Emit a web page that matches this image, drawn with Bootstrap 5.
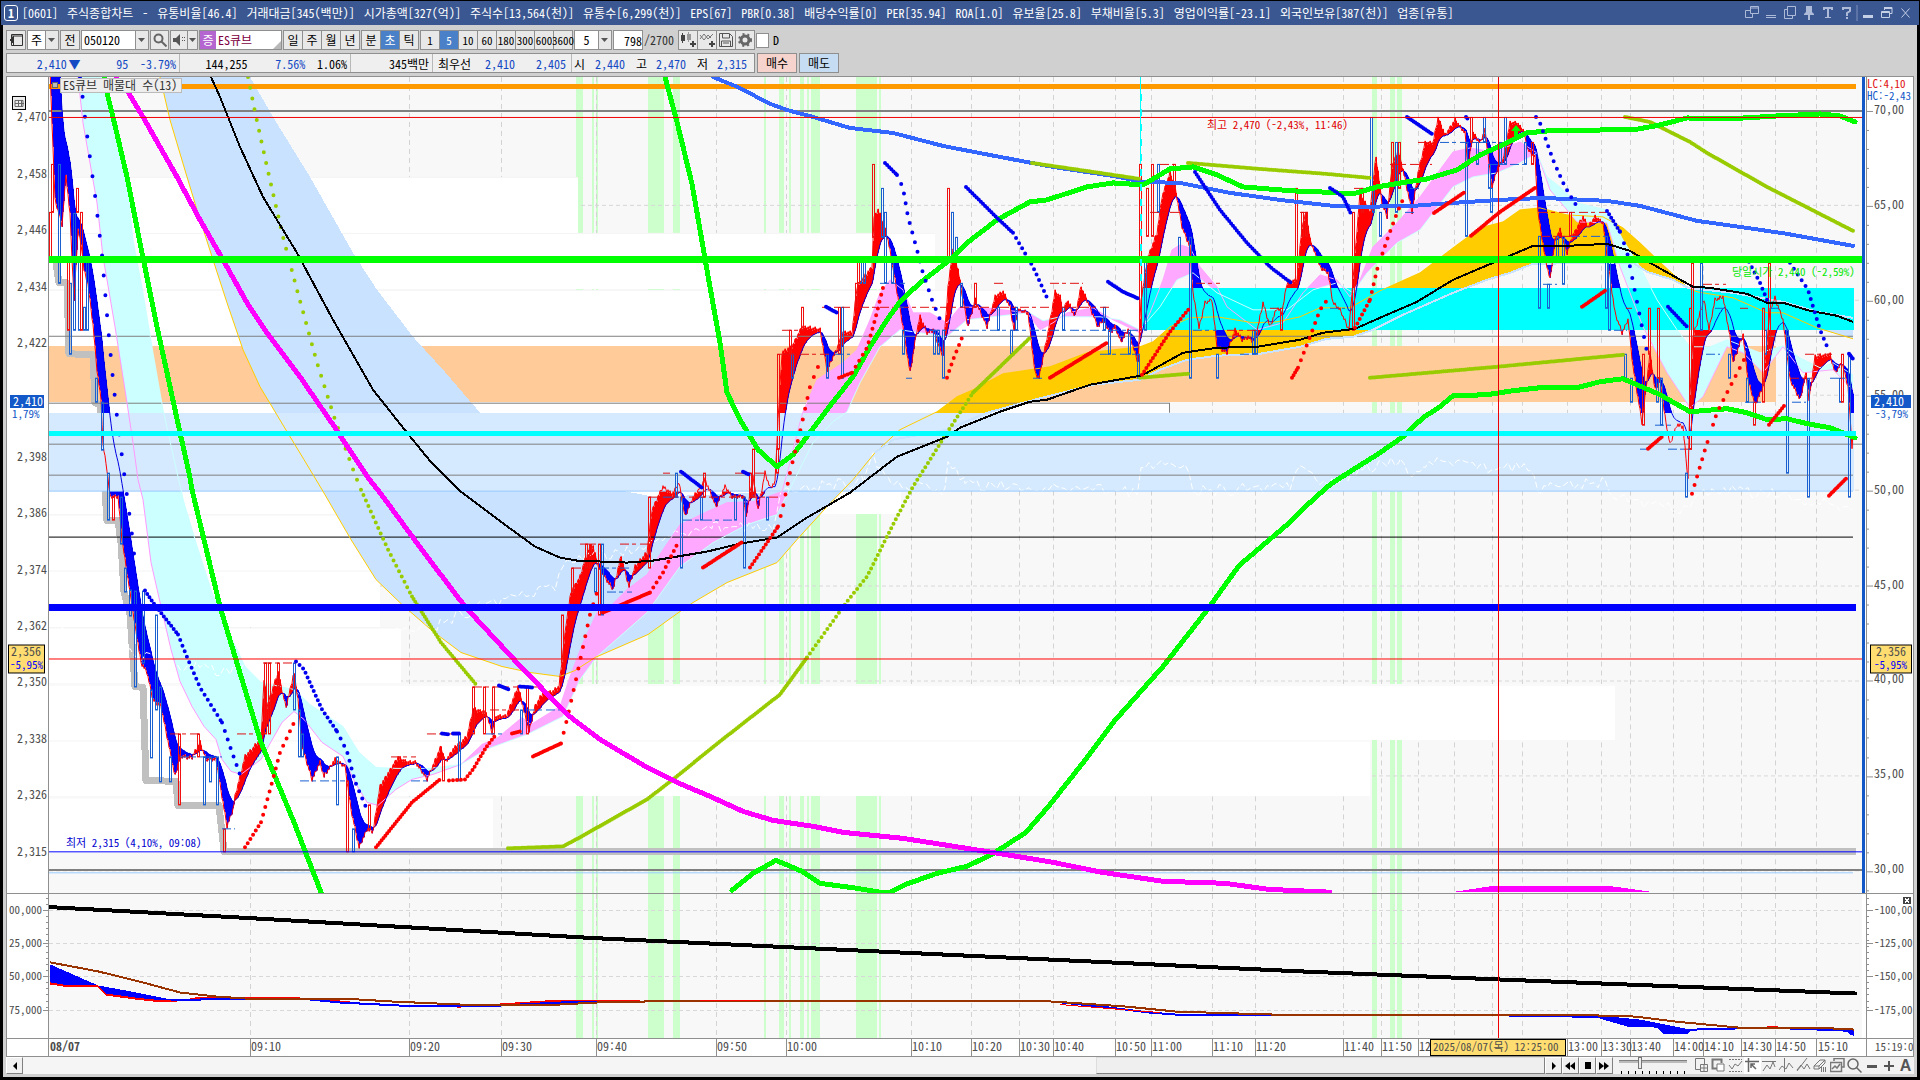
<!DOCTYPE html>
<html lang="ko">
<head>
<meta charset="utf-8">
<meta name="viewport" content="width=device-width, initial-scale=1">
<title>[0601] 주식종합차트</title>
<link href="https://cdn.jsdelivr.net/npm/bootstrap@5.3.0/dist/css/bootstrap.min.css" rel="stylesheet">
<style>
:root{--edge:#8f8f8f;--num:#1449c4}
html,body{height:100%}
body{background:#000;font-family:"Noto Sans Mono CJK KR","Noto Sans CJK KR",sans-serif;font-size:12px;line-height:16px;color:#000;overflow:hidden}
.app{height:100vh;padding:1px 3px 3px 3px}
.titlebar{height:24px;background:#3a5792;color:#fff;margin:0 -2px;padding:0 4px 0 3px;white-space:pre}
.titlebar h1{font-size:12px;line-height:24px;margin:0;font-weight:400;column-gap:9px}
.win-no{width:14px;height:16px;border:1px solid #fff;border-radius:3px;font-weight:700;line-height:14px;text-align:center}
.titlebar button{background:none;border:0;padding:0;width:19px;height:20px;color:#aebbd8;display:flex;align-items:center;justify-content:center}
.shell{background:#d0d0d0;padding:5px 3px 3px 3px}
.tools{height:20px;gap:1px}
.tools .tb,.tools select,.tools input[type=text]{height:20px;border:1px solid var(--edge);border-radius:0;padding:0;font:inherit;line-height:18px;background:#e8e8e8;color:#000;text-align:center}
.tools input[type=text],.tools .fld{background:#fff}
.tools .tb{display:inline-flex;align-items:center;justify-content:center;white-space:nowrap}
.tools select{appearance:none;background:#fff url("data:image/svg+xml,%3Csvg xmlns='http://www.w3.org/2000/svg' width='13' height='18'%3E%3Cpath fill='%23e8e8e8' d='M0 0h13v18H0z'/%3E%3Cpath stroke='%238f8f8f' d='M.5 0v18'/%3E%3Cpath fill='%23555' d='M3 7h7L6.500 11z'/%3E%3C/svg%3E") right center no-repeat;padding-right:13px}
.tools select.code-box{text-align:left;padding-left:2px}
.sq{width:20px}
.seg .tb+.tb{margin-left:-1px}
.seg .tb.on{background:#4a80c8;color:#fff}
.seg.units .tb{font-size:11px}
.quote{height:20px;margin-top:3px}
.qbox{border:1px solid var(--edge);background:#efefef;height:20px;line-height:19px}
.qbox>div{border-right:1px solid #b8b8b8;height:18px;padding-right:3px;display:flex}
.qbox>div:last-child{border-right:0}
.qbox span{text-align:right;white-space:nowrap}
.bl{color:var(--num)}
.quote button{height:20px;width:40px;border:1px solid var(--edge);padding:0;font:inherit;line-height:18px;margin-left:2px}
.frame{margin-top:3px;border:1px solid var(--edge);border-bottom:0;background:#fff;min-height:0}
.pane{min-height:0;border-bottom:1px solid var(--edge)}
.pane svg{display:block;height:100%}
.main-pane{flex:818 1 0}
.sub-pane{flex:144 1 0}
.ax-l{flex:0 0 42px;background:#fff}
.ax-r{flex:0 0 51px;background:#fff}
.plot{flex:1 1 0;min-width:0;background:#f8f8f8}
.timeline{height:18px}
.timeline svg{width:100%;height:17px}
text{font-size:12px}
text.note{font-size:11px}
.scroller{height:17px;background:#f2f2f2}
.scroller button{height:17px;width:17px;padding:0;border:1px solid #808080;border-top-color:#fff;border-left-color:#fff;background:#f0f0f0;line-height:0;display:flex;align-items:center;justify-content:center}
.track{flex:1 1 0;background:#f5f5f5}
.thumb{flex:0 0 449px;border:1px solid #808080;border-top-color:#ddd;border-left-color:#ddd;background:#efefef}
.scroller .ic{border:0;background:none}
.scroller .ic.on{background:#fff}
.speed{width:68px;height:16px;margin:0 6px;appearance:none;background:repeating-linear-gradient(90deg,#000 0 1px,transparent 1px 7px) 2px 13px/68px 3px no-repeat}
.speed::-webkit-slider-runnable-track{height:3px;background:#bbb;border-top:1px solid #808080;margin-top:-8px}
.speed::-webkit-slider-thumb{appearance:none;width:4px;height:12px;background:#eee;border:1px solid #777;margin-top:-4px}
</style>
<script src="https://cdn.jsdelivr.net/npm/bootstrap@5.3.0/dist/js/bootstrap.bundle.min.js"></script>
</head>
<body>
<div class="app d-flex flex-column">
<header class="titlebar d-flex align-items-center">
  <span class="win-no me-1">1</span>
  <h1 class="flex-grow-1 d-flex overflow-hidden"><span>[0601]</span><span>주식종합차트</span><span>-</span><span>유통비율[46.4]</span><span>거래대금[345(백만)]</span><span>시가총액[327(억)]</span><span>주식수[13,564(천)]</span><span>유통수[6,299(천)]</span><span>EPS[67]</span><span>PBR[0.38]</span><span>배당수익률[0]</span><span>PER[35.94]</span><span>ROA[1.0]</span><span>유보율[25.8]</span><span>부채비율[5.3]</span><span>영업이익률[-23.1]</span><span>외국인보유[387(천)]</span><span>업종[유통]</span></h1>
  <button aria-label="창 분리"><svg width="14" height="14" fill="none" stroke="currentColor"><path d="M5.500.5h8v7h-8zM5 4.500H.5v7h7V8M5.500 2h8"/></svg></button>
  <button aria-label="접기"><svg width="14" height="14" fill="none" stroke="currentColor"><path d="M2 9.500h10M2 11.500h10"/></svg></button>
  <button aria-label="복사"><svg width="14" height="14" fill="none" stroke="currentColor"><path d="M4.500.5h8v9h-8zM4 3.500H1.500v9h8V10"/></svg></button>
  <button aria-label="고정"><svg width="12" height="14" fill="currentColor"><path d="M3 0h6v6l2 2v1H7v5H5V9H1V8l2-2z"/></svg></button>
  <button aria-label="글꼴"><svg width="12" height="14" fill="currentColor"><path d="M1 1h10v3H9V3H7v8h2v1H3v-1h2V3H3v1H1z"/></svg></button>
  <button aria-label="도움말"><svg width="10" height="14" fill="none" stroke="currentColor" stroke-width="2"><path d="M1 4V2h7v3L5 7v3M4 12h2"/></svg></button>
  <svg width="2" height="16"><path stroke="#7f91bb" d="M1 0v16"/></svg>
  <button aria-label="최소화"><svg width="12" height="14"><path fill="#c5cfe5" d="M1 9h10v3H1z"/></svg></button>
  <button aria-label="이전 크기"><svg width="12" height="14" fill="none" stroke="#c5cfe5"><path d="M3.500 1v3M3 1.500h8v6H9M3 2.500h8M.5 5.500h8v6h-8zM.5 6.500h8"/></svg></button>
  <button aria-label="닫기"><svg width="12" height="14" fill="none" stroke="#c5cfe5"><path d="M1.500 2.500l8 9M9.500 2.500l-8 9"/></svg></button>
</header>
<main class="shell flex-grow-1 d-flex flex-column">
  <div class="tools d-flex align-items-center">
    <button class="tb sq" aria-label="패널"><svg width="14" height="14" fill="none" stroke="#333"><path d="M2.500 1.500h11v11h-11zM4.500 3v9M13 3H3"/><path fill="#333" d="M1 7l3-3v6z"/></svg></button>
    <select aria-label="구분" style="width:32px"><option>주</option></select>
    <button class="tb sq">전</button>
    <select aria-label="종목코드" class="code-box" style="width:68px"><option>050120</option></select>
    <button class="tb" style="width:19px" aria-label="검색"><svg width="14" height="14" fill="none" stroke="#666" stroke-width="2"><circle cx="5.500" cy="5.500" r="4"/><path d="M8.500 8.500l5 5"/></svg></button>
    <div class="seg d-flex"><button class="tb" style="width:18px" aria-label="음성"><svg width="14" height="12" fill="#555"><path d="M1 4h3l4-4v12L4 8H1zM10 3h1v1h-1zM12 3h1v1h-1zM10 6h1v1h-1zM12 6h1v1h-1z"/></svg></button><button class="tb" style="width:11px" aria-label="음성 메뉴"><svg width="7" height="4" fill="#555"><path d="M0 0h7L3.500 4z"/></svg></button></div>
    <div class="tb fld justify-content-start position-relative" style="width:83px"><span style="background:#b565cf;color:#fff;width:16px;height:18px;line-height:18px">증</span><span style="color:#7d0040;padding-left:2px">ES큐브</span><svg class="position-absolute bottom-0 end-0" width="8" height="8"><path fill="#b8b8b8" d="M8 0v8H0z"/></svg></div>
    <div class="seg d-flex"><button class="tb sq">일</button><button class="tb sq">주</button><button class="tb sq">월</button><button class="tb sq">년</button></div>
    <div class="seg d-flex"><button class="tb sq">분</button><button class="tb sq on">초</button><button class="tb sq">틱</button></div>
    <div class="seg units d-flex"><button class="tb sq">1</button><button class="tb sq on">5</button><button class="tb sq">10</button><button class="tb sq">60</button><button class="tb sq">180</button><button class="tb sq">300</button><button class="tb sq">600</button><button class="tb sq">3600</button></div>
    <select aria-label="단위" style="width:38px"><option>5</option></select>
    <input type="text" aria-label="표시 개수" value="798" class="text-end" style="width:30px">
    <span style="color:#333;width:33px">/2700</span>
    <div class="seg d-flex">
      <button class="tb sq" aria-label="봉 추가"><svg width="16" height="16" fill="#444"><path d="M1 3h4v6H1zM2 1h1v10H2z"/><path fill="#999" d="M7 2h4v6H7zM8 0h1v10H8z"/><path d="M12 9h2v2h2v2h-2v2h-2v-2h-2v-2h2z"/></svg></button>
      <button class="tb sq" aria-label="지표 추가"><svg width="16" height="16" fill="none" stroke="#777"><path d="M1 7l4-5 4 5 5-5M1 3l4 5 4-5 3 3"/><path fill="#444" stroke="none" d="M12 9h2v2h2v2h-2v2h-2v-2h-2v-2h2z"/></svg></button>
      <button class="tb sq" aria-label="저장"><svg width="14" height="14" fill="none" stroke="#555" stroke-width="1"><path d="M.5.5h10l3 3v10H.5zM3.500 1v4h7V1M2.500 13V8h9v5M4 10h6"/></svg></button>
      <button class="tb sq" aria-label="설정"><svg width="14" height="14" fill="none" stroke="#666"><circle cx="7" cy="7" r="4" stroke-width="3"/><circle cx="7" cy="7" r="6" stroke-width="2" stroke-dasharray="2 3"/></svg></button>
    </div>
    <label class="d-flex align-items-center"><input type="checkbox" class="m-0 me-1" style="appearance:none;width:13px;height:15px;background:#fff;border:1px solid #8f8f8f">D</label>
  </div>
  <div class="quote d-flex">
    <div class="qbox d-flex">
      <div class="bl" style="width:173px"><span style="width:60px">2,410</span><span style="width:14px">▼</span><span style="width:48px">95</span><span style="width:48px">-3.79%</span></div>
      <div style="width:171px"><span style="width:68px">144,255</span><span class="bl" style="width:58px">7.56%</span><span style="width:42px">1.06%</span></div>
      <div style="width:82px"><span class="w-100">345백만</span></div>
      <div style="width:139px"><span style="width:38px">최우선</span><span class="bl" style="width:44px">2,410</span><span class="bl" style="width:51px">2,405</span></div>
      <div style="width:182px"><span style="width:13px">시</span><span class="bl" style="width:40px">2,440</span><span style="width:22px">고</span><span class="bl" style="width:39px">2,470</span><span style="width:22px">저</span><span class="bl" style="width:39px">2,315</span></div>
    </div>
    <button style="background:#f7d3cd">매수</button>
    <button style="background:#c5dcf3">매도</button>
  </div>
  <section class="frame flex-grow-1 d-flex flex-column" aria-label="차트">
    <div class="pane main-pane d-flex">
      <svg class="ax-l" id="axL" viewBox="7 77 42 817" preserveAspectRatio="none"></svg>
      <svg class="plot" id="plot" viewBox="49 77 1813 817" preserveAspectRatio="none"></svg>
      <svg class="ax-r" id="axR" viewBox="1862 77 51 817" preserveAspectRatio="none"></svg>
    </div>
    <div class="pane sub-pane d-flex">
      <svg class="ax-l" id="subL" viewBox="7 895 42 143" preserveAspectRatio="none"></svg>
      <svg class="plot" id="sub" viewBox="49 895 1813 143" preserveAspectRatio="none"></svg>
      <svg class="ax-r" id="subR" viewBox="1862 895 51 143" preserveAspectRatio="none"></svg>
    </div>
    <div class="pane timeline"><svg id="time" viewBox="7 1039 1906 17" preserveAspectRatio="none"></svg></div>
  </section>
  <footer class="scroller d-flex align-items-center">
    <button aria-label="왼쪽"><svg width="6" height="8"><path d="M5 0v8L1 4z"/></svg></button>
    <div class="track align-self-stretch"></div><div class="thumb align-self-stretch"></div>
    <button aria-label="재생"><svg width="6" height="10"><path d="M1 1v8l4-4z"/></svg></button>
    <button aria-label="뒤로"><svg width="11" height="8"><path d="M5 0v8L0 4zM10 0v8L5 4z"/></svg></button>
    <button aria-label="정지"><svg width="8" height="8"><path d="M1 0h6v7H1z"/></svg></button>
    <button aria-label="앞으로"><svg width="11" height="8"><path d="M0 0v8l5-4zM5 0v8l5-4z"/></svg></button>
    <input type="range" class="speed" min="0" max="10" value="3" aria-label="속도">
    <button class="ic" aria-label="창 추가"><svg width="15" height="15" fill="none" stroke="#777"><path d="M7 11.500H1.500v-11h9V6M6.500 6.500h7v7h-7zM10 7v7M7 10h6"/></svg></button>
    <button class="ic" aria-label="겹치기"><svg width="15" height="15" fill="none" stroke="#777"><path d="M6 10.500H1.500v-9h9V5" stroke-width="2"/><path fill="#fff" d="M6 6h7v7H6z"/></svg></button>
    <button class="ic" aria-label="영역"><svg width="15" height="15" fill="none" stroke="#777"><path stroke-dasharray="2 1" d="M1 1.500h13M1 13.500h13"/><path d="M1 7l3 4 3-5 3 2 4-5"/></svg></button>
    <button class="ic on" aria-label="십자선"><svg width="15" height="15" fill="none" stroke="#666"><path d="M0 3.500h14M3.500 0v14M6 6l5 5M6 10V6h4" stroke-width="1.500"/></svg></button>
    <button class="ic" aria-label="수평선"><svg width="15" height="15" fill="none" stroke="#777"><path d="M0 3.500h14M1 13l4-6 3 4 3-7 2 5"/></svg></button>
    <button class="ic" aria-label="수직선"><svg width="15" height="15" fill="none" stroke="#777"><path d="M5.500 0v14M0 12l3-4 4 3 3-6 4 5"/></svg></button>
    <button class="ic" aria-label="추세선"><svg width="15" height="15" fill="none" stroke="#777"><path d="M1 13L11 0M1 12l4-5 3 4 3-5 3 5"/></svg></button>
    <button class="ic" aria-label="모두 지우기"><svg width="15" height="15" fill="none" stroke="#777"><path d="M1 8l6-6h5l-6 6zM1 8v3h5V8M6 11l6-6V2M8.500 9v5M10.500 9v5M12.500 9v5"/></svg></button>
    <button class="ic" aria-label="이미지"><svg width="15" height="15" fill="none" stroke="#777"><path d="M4 3V.5h10V9h-2M.5 4.500h11v9H.5zM2 11l3-3 2 2 3-4" stroke-width="1.500"/></svg></button>
    <button class="ic" aria-label="돋보기"><svg width="15" height="15" fill="none" stroke="#666" stroke-width="1.500"><circle cx="6" cy="6" r="5"/><path d="M9.500 9.500l5 5"/></svg></button>
    <button class="ic" aria-label="축소"><svg width="12" height="12"><path fill="#555" d="M1 5h10v3H1z"/></svg></button>
    <button class="ic" aria-label="확대"><svg width="12" height="12"><path fill="#555" d="M1 5h4V1h2v4h4v2H7v4H5V7H1z"/></svg></button>
    <button class="ic fs-6 fw-bold" style="color:#555;font-family:'Liberation Sans',sans-serif">A</button>
  </footer>
</main>
</div>
<script>
const NS='http://www.w3.org/2000/svg', $=id=>document.getElementById(id);
let host=$('plot');
const put=(tag,a,txt)=>{const e=document.createElementNS(NS,tag);for(const k in a)e.setAttribute(k,a[k]);if(txt!=null)e.textContent=txt;host.appendChild(e);return e};
const crisp={'shape-rendering':'crispEdges'};
const box=(x,y,w,h,f,s)=>put('rect',{x,y,width:w,height:h,fill:f||'none',...(s?{stroke:s}:{}),...crisp});
const pl=(p,c,w,o)=>put('polyline',{points:p,fill:'none',stroke:c,'stroke-width':w||1,'stroke-linejoin':'round',...crisp,...o});
const area=(p,c)=>put('polygon',{points:p,fill:c,...crisp});
const h=(y,c,w,x2,x1)=>pl(`${x1||49},${y} ${x2||1862},${y}`,c,w);
const rev=s=>s.trim().split(/\s+/).reverse().join(' ');
const label=(x,y,t,c,o)=>put('text',{x,y,fill:c||'#4d4d4d',...o},t);
const note={class:'note'};
const dots=(p,c,gap,w)=>pl(p,c,w||4,{'stroke-linecap':'round','stroke-dasharray':`0 ${gap||7}`,'shape-rendering':'auto'});

const grid=[250,409,501,596,716,786,911,971,1019,1053,1115,1151,1212,1255,1343,1381,1418,1454,1492,1522,1567,1601,1630,1673,1703,1741,1775,1816];
const stripes=[[576,7],[592,2],[596,2],[648,16],[673,7],[764,2],[779,5],[789,2],[800,4],[807,2],[811,9],[856,21],[879,2],[1372,5],[1390,5],[1397,5]];
const lattice=(y1,y2,rows)=>{stripes.forEach(s=>box(s[0],y1,s[1],y2-y1,'#ccffcc'));
 grid.forEach(x=>pl(`${x+.5},${y1} ${x+.5},${y2}`,'#d3d3d3',1,{'stroke-dasharray':'5 4'}));
 rows.forEach(y=>pl(`49,${y+.5} 1862,${y+.5}`,'#d8d8d8',1,{'stroke-dasharray':'4 3'}));};
lattice(77,894,[205,300,395,490,586,681,776,871]);
// volume profile
[[177,578],[233,935],[290,1141],[402,1169],[458,901],[515,600],[571,380],[628,401],[685,1615],[741,1370],[798,493]].forEach(r=>{box(49,r[0],r[1]-49,56,'#fff');h(r[0]+.5,'#f4f4f4',1,r[1])});
box(49,346,1727,56,'#ffcc99');

// trailing low steps
pl('56,263 59,283 67,283 69,354 93,355 95,403 100,405 101,450 104,475 107,521 118,521 121,543 124,592 130,615 135,687 143,688 146,781 176,782 178,806 219,806 224,852 1856,852','#c0c0c0',7);
// moving average ribbons
const pinkL='78,77 83,123 97,203 103,257 107,280 115,327 125,390 133,443 138,480 143,500 151,563 161,607 171,650 180,682 192,707 204,727 216,740 222,760 231,772 241,775 261,760 282,723 294,712 304,720 322,743 343,757 355,783 367,803 378,806 396,790 412,780 433,775 461,765';
const cyanL='102,77 108,103 127,183 133,240 143,293 153,353 163,410 177,473 184,503 196,543 212,593 229,633 245,667 261,683 294,690 310,705 343,727 359,753 376,768 396,769 429,769 461,765';
area(pinkL+' '+rev(cyanL),'#ccffff');
const goldA='160,77 170,120 187,177 197,210 213,260 227,303 243,350 260,387 287,432 304,460 322,490 351,540 376,580 402,605 433,632 461,653 502,667 530,673 560,677 575,671 595,658 648,635 680,612 693,603 727,583 777,563 797,540 827,507 853,480 875,453';
const blueA='250,77 273,117 310,177 353,253 377,290 413,337 443,370 480,413 535,460 571,477 627,492 653,497 713,495 780,492 813,483 853,468 875,453';
area(goldA+' '+rev(blueA),'#c8e2ff');
const goldB='875,453 900,430 937,412 957,397 973,390 1003,374 1050,367 1087,353 1140,347 1153,342 1170,327 1190,318 1217,317 1253,323 1277,322 1300,317 1320,308 1350,308 1380,291 1420,273 1453,248 1480,228 1503,222 1520,210 1540,208 1567,215 1603,217 1623,228 1640,243 1663,265 1688,288';
const blueB='875,453 893,440 947,430 987,413 1027,402 1093,385 1140,380 1160,370 1187,360 1217,356 1260,354 1300,347 1327,339 1353,337 1373,330 1403,315 1453,293 1487,280 1510,273 1533,264 1603,263 1633,263 1647,272 1673,280 1688,288';
area(goldB+' '+rev(blueB),'#ffcc00');
area('1815,328 1853,318 1853,339','#c8e2ff');
const pinkM='461,765 482,745 498,738 522,718 531,725 547,715 560,707 570,677 583,643 597,613 607,610 627,590 647,575 663,550 680,525 707,512 727,503 753,502 782,492 790,463 798,430 803,412 817,380 843,363 857,350 870,320 880,293 890,280 903,290 913,313 930,313 947,323 960,307 987,308 1027,313 1040,330 1053,323 1067,313 1093,308 1113,320 1140,333 1150,313 1163,280 1172,250 1180,245 1190,248 1200,267 1217,287 1227,307 1257,330 1283,323 1303,293 1320,275 1337,280 1350,297 1360,280 1373,247 1397,223 1420,197 1453,152 1470,148 1493,152 1520,142 1537,153';
const cyanM='461,765 486,750 527,735 551,723 563,717 580,680 597,657 647,613 680,567 713,543 747,525 777,515 793,483 813,443 833,422 847,412 860,383 880,347 900,330 920,333 947,337 967,320 1010,315 1030,313 1043,321 1060,317 1100,317 1120,320 1140,330 1160,307 1177,280 1193,273 1217,293 1253,310 1287,310 1313,290 1337,283 1353,293 1367,273 1397,243 1420,230 1453,187 1473,177 1497,173 1520,163 1537,153';
area(pinkM+' '+rev(cyanM),'#ffa8ff');
const pinkR='1537,153 1550,190 1577,222 1607,223 1620,267 1643,327 1667,373 1690,408 1703,397 1727,347 1743,353 1763,373 1783,347 1803,373 1833,370 1853,390';
const cyanR='1537,153 1547,177 1560,187 1577,203 1607,210 1623,240 1640,267 1657,300 1677,330 1690,347 1710,347 1727,340 1760,353 1783,346 1800,358 1820,368 1833,363 1853,375';
area(pinkR+' '+rev(cyanR),'#ccffff');

// fast price line and its slow average, filled by direction
const P=`50,70 55,200 62,225 66,175 70,215 74,300 78,230 82,250 84,270 88,285 93,325 97,370 101,400 103,445 107,470 110,497 118,497 122,540 133,613 141,663 147,673 153,700 161,707 167,737 175,777 180,757 192,758 200,743 206,760 216,760 222,797 227,827 233,810 235,797 245,757 261,740 264,680 267,707 278,673 286,708 294,673 298,700 302,747 312,780 320,763 324,777 335,760 345,767 351,810 359,848 367,830 373,832 380,787 398,758 408,763 416,763 427,780 441,747 445,763 453,750 467,737 473,710 486,713 492,733 496,717 506,717 518,687 529,732 535,707 543,693 551,693 559,687 567,617 571,593 580,577 584,563 590,547 593,547 598,567 613,590 621,557 629,587 635,567 647,553 652,510 663,487 672,495 679,483 685,517 692,500 705,480 716,507 725,487 732,497 743,497 746,517 753,477 758,510 765,473 770,488 775,483 778,420 780,387 782,353 792,347 802,327 820,330 827,370 835,353 843,333 852,333 857,287 872,267 874,217 878,210 883,223 888,240 895,280 903,327 910,373 917,330 920,317 927,333 933,330 943,357 948,287 953,250 958,270 963,300 968,327 975,300 987,327 995,297 1003,292 1010,307 1014,330 1018,310 1028,313 1035,373 1039,378 1048,333 1055,292 1060,297 1063,313 1067,300 1075,317 1081,287 1088,303 1098,327 1103,320 1110,333 1115,327 1121,342 1128,330 1138,363 1141,300 1148,257 1157,233 1162,197 1170,173 1175,187 1182,227 1190,247 1193,293 1199,328 1205,303 1212,300 1217,347 1227,353 1235,330 1242,340 1248,337 1253,342 1258,327 1263,303 1270,327 1277,308 1282,313 1287,283 1297,280 1302,227 1306,213 1310,240 1320,267 1328,273 1333,303 1340,310 1349,330 1353,280 1360,193 1370,213 1372,190 1376,157 1382,203 1387,217 1392,167 1398,150 1403,170 1412,212 1418,173 1425,143 1433,143 1438,118 1445,135 1455,120 1465,133 1468,167 1473,133 1480,143 1485,130 1492,187 1498,167 1503,160 1510,123 1517,123 1523,130 1528,150 1535,157 1538,213 1545,257 1550,280 1555,240 1560,230 1567,253 1572,237 1583,217 1588,227 1595,217 1603,223 1608,263 1615,313 1622,333 1628,320 1633,367 1642,423 1647,380 1650,353 1655,390 1660,380 1665,417 1670,445 1677,425 1683,427 1688,480 1690,397 1693,337 1704,300 1709,330 1715,300 1723,297 1730,337 1733,363 1743,335 1748,380 1755,405 1763,387 1770,310 1775,298 1783,320 1790,380 1800,400 1806,373 1809,400 1815,357 1830,355 1835,373 1842,363 1848,387 1852,447 1853,433`.split(' ').map(s=>s.split(',').map(Number));
let up='',dn='',slow='',fast='',S=-260,i=0;
for(let x=50;x<=1853;x++){while(P[i+1]&&P[i+1][0]<x)i++;const a=P[i],b=P[i+1],v=a[1]+(b[1]-a[1])*(x-a[0])/(b[0]-a[0]);
 S+=(v-S)*(x<66?.12:.1);const jag=v+((x*7)%5-2);
 slow+=`${x},${S.toFixed(0)} `;fast+=`${x},${jag.toFixed(0)} `;
 const seg=`M${x}.5,${S.toFixed(0)}V${jag.toFixed(0)}`;if(v<S)up+=seg;else dn+=seg;}
put('path',{d:up,stroke:'#f00',...crisp});put('path',{d:dn,stroke:'#00f',...crisp});

box(49,413,1805,78,'#d5eaff');
box(1141,288,713,42,'#00ffff');
h(403.5,'#808080',1,1169);pl('1169.5,403 1169.5,413','#808080');

// volume trace
let tr='',seed=7;const vt=[[50,630],[180,668],[230,672],[245,665],[401,630],[440,625],[482,607],[555,588],[563,562],[640,550],[655,537],[680,535],[713,528],[773,525],[782,490],[863,482],[873,457],[890,485],[945,490],[948,460],[965,485],[1138,492],[1141,462],[1185,465],[1195,492],[1290,488],[1296,468],[1320,482],[1355,478],[1375,465],[1400,462],[1412,475],[1425,463],[1465,462],[1480,470],[1530,465],[1540,492],[1550,484],[1605,484],[1620,500],[1690,512],[1700,490],[1780,495],[1853,510]];
for(let k=0;k<vt.length-1;k++)for(let x=vt[k][0];x<vt[k+1][0];x+=4){seed=(seed*73+41)%101;tr+=`${x},${(vt[k][1]+(vt[k+1][1]-vt[k][1])*(x-vt[k][0])/(vt[k+1][0]-vt[k][0])+(seed/101-.5)*12).toFixed(0)} `}
pl(tr,'#fff',1,{'stroke-dasharray':'6 3'});

// fixed levels
h(86.5,'#ff9900',5,1856);h(111,'#808080',2);h(336.5,'#808080',1,1853);h(444.5,'#808080');h(475.5,'#808080',1,1853);h(491.5,'#99ccff',1,1853);h(537.5,'#000',1,1853);
h(871,'#808080',2);h(873.5,'#99ccff',1,1853);
// ribbon outlines
pl(pinkL,'#ff99ff');pl(cyanL,'#ccffff');pl(pinkM,'#ffa8ff');pl(cyanM,'#ccffff');pl(pinkR,'#ffa8ff');pl(cyanR,'#ccffff');
pl(goldA+' '+goldB+' 1697,292 1733,298 1767,313 1783,313 1817,328 1853,339','#ffcc00');pl(blueB+' 1733,293 1783,302 1817,312 1853,318','#c8e2ff',2);
pl(slow,'#0000e0');
pl(fast,'#f00');

// candles: x, top, bottom
const candles=(s,c)=>s.split(' ').forEach(q=>{const [x,a,b]=q.split(',').map(Number);box(x-.5,a+.5,2,b-a,'none',c)});
candles('59,164,283 74,213,330 70,283,354 79,260,330 87,260,330 84,307,330 96,378,402 102,402,450 108,473,520 121,497,544 125,568,592 130,590,616 135,591,687 143,591,663 156,615,710 151,690,758 160,687,782 170,757,782 204,757,805 210,757,782 217,757,805 294,663,710 299,710,757 302,734,757 337,757,805 353,829,852 459,734,781 521,710,734 602,544,615 595,568,592 676,473,497 681,497,568 701,497,520 735,497,520 744,497,568 767,497,520 792,354,378 827,354,378 842,307,378 860,262,283 864,262,283 882,188,237 885,212,283 892,262,283 903,330,354 934,330,354 938,330,354 943,330,378 952,212,260 956,237,262 961,283,307 998,307,330 1011,330,354 1016,307,330 1063,307,330 1104,307,330 1109,330,354 1129,330,354 1138,354,378 1145,260,330 1158,164,212 1179,237,260 1190,237,378 1217,354,378 1253,330,354 1256,330,354 1371,117,188 1373,188,212 1380,212,236 1396,142,212 1466,142,236 1477,142,164 1484,117,142 1491,188,212 1489,164,188 1500,142,164 1505,117,164 1525,142,164 1539,236,308 1548,284,308 1557,236,257 1563,236,284 1606,236,308 1609,260,330 1625,354,378 1631,378,402 1661,378,425 1657,378,402 1686,473,497 1701,263,330 1729,354,378 1747,378,402 1765,330,354 1787,330,473 1808,378,497 1840,378,402 1849,354,497','#1a60d0');
candles('52,164,212 50,212,257 77,188,212 81,212,330 68,260,330 113,497,520 179,734,805 198,734,757 224,829,852 265,663,734 269,663,734 278,663,687 347,781,852 369,805,829 443,757,781 473,687,734 484,687,734 493,687,734 527,687,734 562,615,663 572,568,592 586,544,568 590,544,568 599,544,615 649,497,568 704,473,497 753,449,497 750,473,497 777,449,473 778,354,449 790,330,354 802,307,330 839,307,354 856,283,307 858,260,283 873,164,237 948,188,260 975,283,307 1140,164,330 1147,188,236 1152,164,236 1174,164,188 1281,308,330 1296,188,283 1302,212,236 1306,212,236 1353,212,330 1362,188,212 1392,142,188 1399,142,188 1471,117,142 1532,142,164 1570,212,236 1643,354,425 1649,308,354 1658,308,378 1690,308,449 1692,263,378 1754,402,425 1763,308,402 1769,263,354 1842,354,402','#f01010');
const ticks=(s,c)=>s.split(' ').forEach(q=>{const [y,a,b]=q.split(',').map(Number);pl(`${a},${y}.5 ${b},${y}.5`,c,1,{'stroke-dasharray':'9 3 4 4'})});
ticks('663,263,296 687,473,545 734,170,200 734,237,265 757,391,416 734,427,460 710,490,520 544,580,597 544,620,648 568,572,590 473,663,670 473,735,765 497,649,778 330,782,800 307,822,850 354,780,830 307,860,1112 283,1050,1083 283,994,1006 164,1160,1175 212,1150,1180 283,1196,1220 330,1227,1258 308,1270,1283 212,1300,1308 188,1354,1364 164,1390,1432 142,1418,1430 212,1539,1606 236,1541,1570 284,1703,1726 308,1740,1748 354,1805,1832 378,1790,1812 449,1684,1692 308,1626,1632','#e01010');
ticks('757,180,222 710,526,560 734,486,502 781,300,345 781,411,430 829,222,235 568,600,630 592,607,632 520,683,735 497,663,680 354,835,850 283,880,905 307,895,905 330,930,1138 378,906,912 378,1033,1042 354,1100,1138 330,1193,1217 354,1240,1258 308,1330,1345 142,1440,1500 164,1490,1530 212,1405,1415 188,1410,1420 236,1571,1606 284,1543,1557 330,1614,1627 449,1640,1650 425,1655,1672 449,1668,1690 354,1706,1720 308,1715,1725 402,1745,1765 402,1792,1806 378,1830,1845 308,1770,1782','#1a60d0');

// long averages
pl('713,77 740,88 768,103 787,110 813,117 850,128 893,133 943,146 1000,157 1053,167 1113,176 1143,182 1180,183 1230,193 1280,200 1333,206 1360,207 1413,206 1453,203 1500,200 1543,198 1607,201 1640,206 1697,221 1740,227 1787,234 1853,246','#3366ff',4,{'stroke-linecap':'round'});
const ol='#99cc00';
dots('248,77 255,112 267,167 283,237 297,290 317,363 335,420 355,475 361,490',ol,11);dots('361,490 388,550 412,597',ol,6);dots('412,597 441,643 476,685',ol,3);
dots('508,849 563,847 580,838 647,800 673,780 720,742 780,695 807,658',ol,2);dots('807,658 847,602 867,577 893,525 913,487 947,433 973,393',ol,5);
['973,393 1000,367 1030,338','1032,163 1100,173 1140,179','1188,163 1260,169 1327,174 1370,178','1140,378 1188,374','1370,378 1497,367 1623,355','1625,117 1650,122 1670,132 1690,142 1707,153 1767,187 1853,231'].forEach(p=>dots(p,ol,2));
const G={'stroke-linecap':'round'},lime='#00ff00';
pl('104,77 108,97 113,117 127,177 142,253 157,327 167,373 180,433 190,478 192,490 220,607 241,677 261,743 294,823 321,893',lime,5,G);
pl('665,77 677,122 692,184 708,276 720,343 727,393 740,420 758,450 777,467 793,455 807,437 827,410 853,377 870,347 887,320 900,302 920,283 950,260 967,243 997,220 1030,202 1047,200 1087,187 1113,183 1143,185 1170,169 1193,167 1217,175 1243,187 1293,191 1320,192 1353,194 1377,187 1407,182 1427,179 1457,170 1480,155 1507,143 1527,133 1547,131 1603,130 1633,130 1660,125 1687,118 1727,119 1777,116 1820,114 1840,116 1855,122',lime,5,G);
pl('732,891 753,874 776,861 802,872 820,884 857,889 880,893 890,893 906,885 937,874 967,867 992,855 1026,833 1051,804 1084,762 1114,722 1163,667 1206,612 1239,566 1286,526 1313,500 1330,485 1353,470 1377,455 1403,437 1423,418 1440,407 1453,396 1487,395 1513,391 1540,388 1577,388 1600,382 1623,379 1637,385 1660,395 1690,412 1727,409 1747,413 1767,420 1787,419 1807,424 1830,428 1855,438',lime,5,G);
pl('211,77 220,97 240,147 263,197 297,253 333,320 373,390 407,433 429,460 461,492 502,523 535,547 560,558 577,561 627,563 653,561 707,552 740,544 777,538 807,518 850,493 897,457 927,445 947,437 960,428 1000,412 1030,402 1047,400 1090,385 1140,376 1147,373 1183,353 1217,348 1257,347 1300,340 1323,333 1355,329 1380,318 1417,302 1453,280 1493,263 1533,246 1567,246 1607,244 1630,251 1650,263 1693,287 1710,288 1747,294 1767,303 1783,303 1810,311 1837,316 1853,322','#000',2);
// parabolic dots
['80,77 83,100 88,143 95,195 102,255 108,327 113,380 117,417 123,465 133,543 135,565|20','145,591 153,603 178,635|4','178,635 188,660 200,688 222,723|6','222,723 231,750 241,778|9','296,662 304,670 322,710 337,732|5','337,732 347,752 355,782 366,808|8','442,734 449,735|2','453,734 460,734|2','499,686 509,690|2','520,687 533,688|2','681,472 702,488|2','743,472 749,475|2','826,307 837,313|2','885,163 897,175|3','897,175 903,188 908,217 917,250 922,270 932,300 943,327|10','966,187 997,218 1013,233|3','1013,233 1033,267 1048,300|6','1108,282 1123,292 1139,299|2','1195,172 1220,210 1247,243 1270,267 1291,283|3','1330,188 1343,197 1351,214|3','1407,117 1432,134|2','1466,117 1468,119|2','1536,117 1540,123 1553,160 1565,187 1579,210|8','1607,211 1620,232|4','1620,232 1627,252 1638,307 1647,352|12','1668,307 1687,327|3','1749,262 1760,283 1767,300|6','1790,263 1808,290 1820,330 1828,349|7','1849,354 1853,359|2'].forEach(s=>{const [p,g]=s.split('|');dots(p,'#0000f0',g)});
['245,848 261,823|5','261,823 271,787 280,753 295,721|8','376,848 396,823 412,803 440,780|3','449,781 465,780 473,770 486,748 496,735|4','512,734 520,732|2','533,757 561,744|2','561,744 567,720 576,680 590,615 597,593|11','603,613 650,593|2','650,593 663,573 679,541|6','703,568 743,542|2','750,568 778,527|4','778,527 783,507 790,473 801,428 810,387 822,357|11','839,378 852,373|3','852,373 867,348 875,320 883,288|7','947,378 953,360 964,333|7','1050,378 1107,343|2','1142,375 1170,332 1189,309|4','1292,378 1298,368|3','1298,368 1310,337 1320,310 1328,299|8','1355,328 1370,300|5','1370,300 1377,270 1387,240 1397,213 1405,195|8','1434,213 1465,192|2','1471,236 1500,212 1535,188|2','1582,307 1605,291|2','1648,449 1662,437|2','1692,494 1705,450 1717,413 1727,393 1745,358|9','1769,425 1785,405|3','1829,496 1847,478|2'].forEach(s=>{const [p,g]=s.split('|');dots(p,'#ff0000',g)});
pl('115,77 128,92 143,117 177,177 200,220 223,260 247,303 267,333 300,377 333,425 368,478 380,493 424,553 465,607 514,660 567,715 600,740 647,768 677,783 710,797 743,812 773,821 813,827 843,833 903,839 992,853 1053,863 1102,873 1163,882 1225,884 1268,890 1332,893','#ff00ff',5);
area('1451,893 1490,887 1612,887 1655,893','#ff00ff');
h(607.5,'#00f',7,1856);h(259.5,lime,7);h(433.5,'#00ffff',5,1856);
h(117.5,'#f00000');h(659.5,'#f00');h(852.5,'#00f');
pl('1140.5,77 1140.5,164','#00ffff',1);pl('1141,94 1141,288','#00ffff',2,{'stroke-dasharray':'7 8'});
put('path',{d:'M1516 125l5 6h-3v5h-4v-5h-3z',fill:lime});
pl('1498.5,77 1498.5,894','#f00000');
label(1207,129,'최고 2,470 (-2,43%, 11:46)','#e00000',note);
label(66,848,'최저 2,315 (4,10%, 09:08)','#0000d0',note);
label(1732,276,'당일시가 2,440 (-2,59%)','#00e800',note);
box(60.5,78.5,121,14,'#eeeeee','#bbbbbb');label(63,90,'ES큐브 매물대 수(13)','#333');
box(52.5,82.5,5,5,'#bbb','#666');

// left price scale
host=$('axL');
['2,470','2,458','2,446','2,434','2,422','2,410','2,398','2,386','2,374','2,362','2,350','2,338','2,326','2,315'].forEach((t,k)=>{if(k!=5)label(47,121+Math.round(k*56.6),t,null,{'text-anchor':'end'})});
box(10,395,34,13,'#1258c8');label(13,406,'2,410','#fff');label(12,418,'1,79%','#1258c8',note);
box(8.5,645.5,36,28,'#ffdd70','#000');label(11,657,'2,356');label(10,670,'-5,95%','#00f',note);
box(12.5,96.5,13,13,'#eee','#000');pl('15,100.5 23,100.5 23,106.5 15,106.5 15,100.5','#666');pl('18.5,100 18.5,107','#666');pl('21.5,100 21.5,107','#666');pl('15,103.5 24,103.5','#666');
pl('48.5,77 48.5,894','#8f8f8f');
// right index scale
host=$('axR');
box(1862,77,3,817,'#1258c8');pl('1866.5,77 1866.5,894','#8f8f8f');
for(let y=110.5,k=0;y<894;y+=19.03,k++)pl(`1867,${Math.round(y)+.5} ${k%5?1869:1873},${Math.round(y)+.5}`,'#8f8f8f');
label(1867,88,'LC:4,10','#e01010',note);label(1867,100,'HC:-2,43','#1258c8',note);
['70,00','65,00','60,00','55,00','50,00','45,00','40,00','35,00','30,00'].forEach((t,k)=>label(1874,114+k*95,t));
box(1871,395,40,13,'#1258c8');label(1874,406,'2,410','#fff');label(1875,418,'-3,79%','#1258c8',note);
box(1870.5,645.5,41,28,'#ffdd70','#000');label(1876,657,'2,356');label(1874,670,'-5,95%','#00f',note);

// lower pane
host=$('sub');
lattice(895,1038,[911,944,977,1010]);
area('50,965 98,986 131,992 171,1000 190,1000 163,1003 135,999 106,995 98,987 69,987 50,984','#00f');
pl('50,984 69,987 98,987 106,995 135,999 163,1002 190,1000 200,998 250,998 300,999 330,1001 360,1004 400,1006 460,1007 500,1005 560,1001 600,1001 640,1001','#f00',2);
pl('171,1001 200,1000 250,999 300,999 340,1003 400,1006 500,1006 560,1003 640,1002 930,1001 1053,1002 1109,1008 1150,1013 1176,1015 1545,1016 1604,1018','#00f',2);
area('1600,1016 1640,1020 1691,1030 1687,1034 1664,1034 1658,1027 1628,1026 1600,1018','#00f');
pl('1600,1018 1628,1026 1658,1027 1664,1033 1687,1033 1691,1030 1767,1028 1848,1031','#00f',2);pl('1767,1027 1780,1028','#f00',2);area('1846,1030 1854,1030 1854,1036 1850,1035','#00f');
pl('50,963 98,972 139,982 180,993 216,997 245,999 343,999 392,1002 461,1005 559,1005 596,1003 640,1002 930,1001 1053,1002 1126,1007 1176,1012 1274,1015 1567,1015 1636,1017 1676,1022 1739,1028 1850,1029 1854,1030','#993300',2);
pl('700,1001 760,1001','#f00');pl('1060,1005 1160,1013','#f00');
pl('49,908 250,919 596,939 640,941 1300,972 1498,980 1855,994','#000',4,G);
pl('1498.5,895 1498.5,1038','#f00000');
host=$('subL');
['00,000','25,000','50,000','75,000'].forEach((t,k)=>{label(42,915+k*33,t,null,{'text-anchor':'end',...note});pl(`43,${911.5+k*33} 48,${911.5+k*33}`,'#8f8f8f')});
pl('48.5,895 48.5,1038','#8f8f8f');
for(let y=899;y<1012;y+=6)pl(`46,${y}.5 48,${y}.5`,'#8f8f8f');
host=$('subR');
pl('1866.5,895 1866.5,1038','#8f8f8f');
['-100,00','-125,00','-150,00','-175,00'].forEach((t,k)=>{label(1874,915+k*33,t,null,note);pl(`1867,${911.5+k*33} 1873,${911.5+k*33}`,'#8f8f8f')});
for(let y=899;y<1012;y+=6)pl(`1867,${y}.5 1869,${y}.5`,'#8f8f8f');
box(1903,898,8,7,'#444');pl('1905,899.500 1909,903.500','#fff');pl('1909,899.500 1905,903.500','#fff');

// time scale
host=$('time');
[48,...grid.filter(x=>![1454,1492,1522].includes(x)),1866].forEach(x=>pl(`${x+.5},1039 ${x+.5},1056`,'#8f8f8f'));
label(50,1051,'08/07',null,{'font-weight':700});
[[251,'09:10'],[410,'09:20'],[502,'09:30'],[597,'09:40'],[717,'09:50'],[787,'10:00'],[912,'10:10'],[972,'10:20'],[1020,'10:30'],[1054,'10:40'],[1116,'10:50'],[1152,'11:00'],[1213,'11:10'],[1256,'11:20'],[1344,'11:40'],[1382,'11:50'],[1419,'12'],[1568,'13:00'],[1602,'13:30'],[1631,'13:40'],[1674,'14:00'],[1704,'14:10'],[1742,'14:30'],[1776,'14:50'],[1818,'15:10']].forEach(a=>label(a[0],1051,a[1]));
label(1875,1051,'15:19:0',null,note);
box(1430.5,1039.5,135,16,'#ffdd70','#000');label(1433,1051,'2025/08/07(목) 12:25:00',null,note);
</script>
</body>
</html>
